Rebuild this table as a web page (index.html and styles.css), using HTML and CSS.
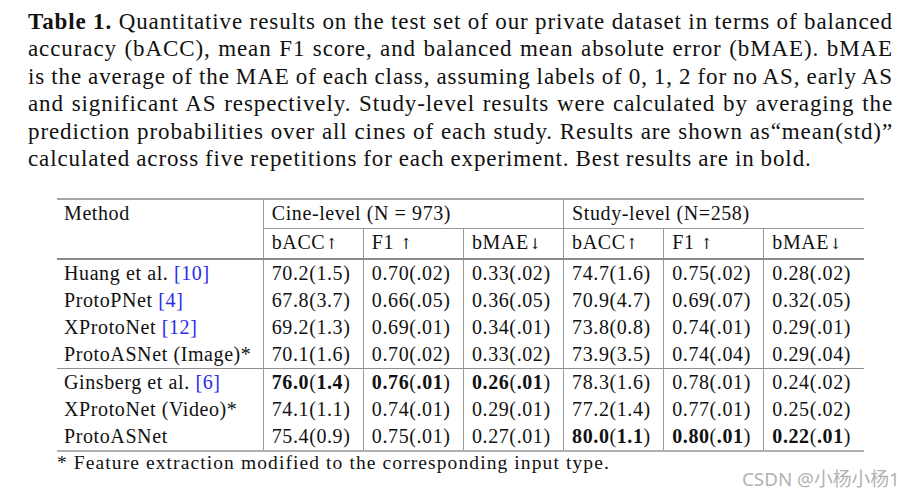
FILE: index.html
```html
<!DOCTYPE html>
<html>
<head>
<meta charset="utf-8">
<link rel="stylesheet" href="styles.css">
</head>
<body>
<div class="page">
  <div class="caption">
    <span class="line"><b>Table 1.</b> Quantitative results on the test set of our private dataset in terms of balanced</span>
    <span class="line">accuracy (bACC), mean F1 score, and balanced mean absolute error (bMAE). bMAE</span>
    <span class="line">is the average of the MAE of each class, assuming labels of 0, 1, 2 for no AS, early AS</span>
    <span class="line">and significant AS respectively. Study-level results were calculated by averaging the</span>
    <span class="line">prediction probabilities over all cines of each study. Results are shown as“mean(std)”</span>
    <span class="line last">calculated across five repetitions for each experiment. Best results are in bold.</span>
  </div>
  <table class="results">
    <colgroup>
      <col class="c-method"><col class="c-val"><col class="c-val"><col class="c-val"><col class="c-val"><col class="c-val"><col class="c-val">
    </colgroup>
    <thead>
      <tr class="h1">
        <th rowspan="2" class="method">Method</th>
        <th colspan="3" class="grp">Cine-level (N = 973)</th>
        <th colspan="3" class="grp">Study-level (N=258)</th>
      </tr>
      <tr class="h2">
        <th>bACC<span class="arr">↑</span></th>
        <th>F1 <span class="arr">↑</span></th>
        <th>bMAE<span class="arr">↓</span></th>
        <th>bACC<span class="arr">↑</span></th>
        <th>F1 <span class="arr">↑</span></th>
        <th>bMAE<span class="arr">↓</span></th>
      </tr>
    </thead>
    <tbody>
      <tr><td class="method">Huang et al. <span class="cite">[10]</span></td><td>70.2(1.5)</td><td>0.70(.02)</td><td>0.33(.02)</td><td>74.7(1.6)</td><td>0.75(.02)</td><td>0.28(.02)</td></tr>
      <tr><td class="method">ProtoPNet <span class="cite">[4]</span></td><td>67.8(3.7)</td><td>0.66(.05)</td><td>0.36(.05)</td><td>70.9(4.7)</td><td>0.69(.07)</td><td>0.32(.05)</td></tr>
      <tr><td class="method">XProtoNet <span class="cite">[12]</span></td><td>69.2(1.3)</td><td>0.69(.01)</td><td>0.34(.01)</td><td>73.8(0.8)</td><td>0.74(.01)</td><td>0.29(.01)</td></tr>
      <tr><td class="method">ProtoASNet (Image)*</td><td>70.1(1.6)</td><td>0.70(.02)</td><td>0.33(.02)</td><td>73.9(3.5)</td><td>0.74(.04)</td><td>0.29(.04)</td></tr>
      <tr class="sep"><td class="method">Ginsberg et al. <span class="cite">[6]</span></td><td><b>76.0</b>(<b>1.4</b>)</td><td><b>0.76</b>(<b>.01</b>)</td><td><b>0.26</b>(<b>.01</b>)</td><td>78.3(1.6)</td><td>0.78(.01)</td><td>0.24(.02)</td></tr>
      <tr><td class="method">XProtoNet (Video)*</td><td>74.1(1.1)</td><td>0.74(.01)</td><td>0.29(.01)</td><td>77.2(1.4)</td><td>0.77(.01)</td><td>0.25(.02)</td></tr>
      <tr><td class="method">ProtoASNet</td><td>75.4(0.9)</td><td>0.75(.01)</td><td>0.27(.01)</td><td><b>80.0</b>(<b>1.1</b>)</td><td><b>0.80</b>(<b>.01</b>)</td><td><b>0.22</b>(<b>.01</b>)</td></tr>
    </tbody>
  </table>
  <p class="note">* Feature extraction modified to the corresponding input type.</p>
  <div class="watermark">CSDN @小杨小杨1</div>
</div>
</body>
</html>
```

FILE: styles.css
```css
html, body {
  margin: 0;
  padding: 0;
  background: #ffffff;
}

.page {
  position: relative;
  width: 915px;
  height: 498px;
  overflow: hidden;
  font-family: "Liberation Serif", "Times New Roman", serif;
  color: #111111;
}

.caption {
  padding: 8px 0 0 28px;
  width: 865px;
  font-size: 23px;
  line-height: 27.4px;
  letter-spacing: 0.9px;
  word-spacing: -0.7px;
}

.caption .line {
  display: block;
  text-align: justify;
  text-align-last: justify;
  white-space: nowrap;
}

.caption .line.last {
  text-align: left;
  text-align-last: left;
}

.caption b {
  font-weight: bold;
}

.results {
  margin: 26px 0 0 57px;
  border-collapse: collapse;
  table-layout: fixed;
  width: 807px;
  font-size: 20px;
  letter-spacing: 0.6px;
  border-top: 2px solid #a6a6a6;
  border-bottom: 2px solid #b0b0b0;
}

.c-method { width: 206px; }
.c-val { width: 100px; }

.results th,
.results td {
  font-weight: normal;
  text-align: left;
  vertical-align: top;
  padding: 0 0 0 8px;
  height: 27px;
  line-height: 27px;
  white-space: nowrap;
  border-left: 1px solid #9a9a9a;
}

.results th.method,
.results td.method {
  border-left: none;
  padding-left: 7px;
}

.results tr.h1 th {
  height: 28px;
}

.results th.grp {
  border-bottom: 1px solid #9a9a9a;
}

.results tr.h2 th {
  height: 28px;
}

.results thead {
  border-bottom: 2px solid #8a8a8a;
}

.results tr.sep td {
  border-top: 1px solid #8f8f8f;
}

.results b {
  font-weight: bold;
}

.arr {
  font-family: "DejaVu Serif", serif;
  font-size: 15px;
}

.cite {
  color: #2b2bea;
}

.note {
  margin: 0 0 0 57px;
  font-size: 19.5px;
  letter-spacing: 1.1px;
  line-height: 22px;
}

.watermark {
  position: absolute;
  left: 742px;
  top: 467px;
  font-family: "Noto Sans", "Noto Sans CJK SC", sans-serif;
  font-size: 18.8px;
  line-height: 24px;
  color: #b3b3b3;
}
```
